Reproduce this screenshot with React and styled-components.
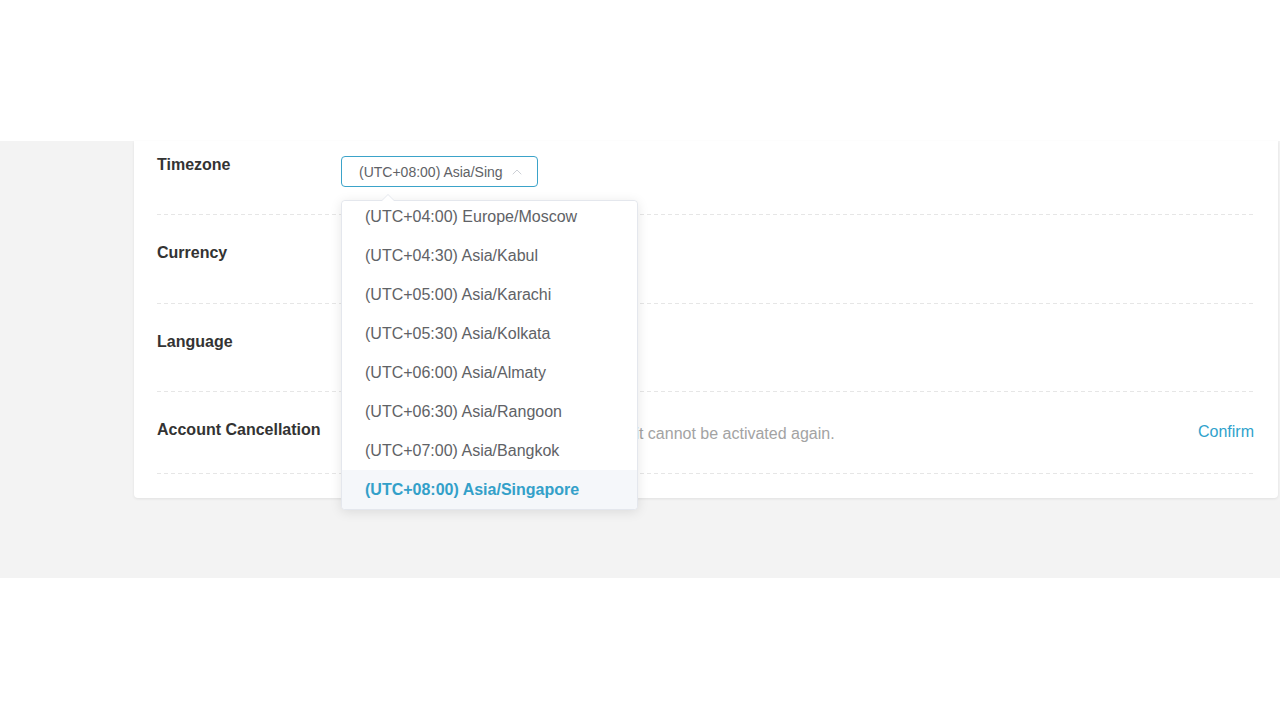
import React from "react";
import styled, { createGlobalStyle } from "styled-components";
import { ChevronUp } from "lucide-react";

const GlobalStyle = createGlobalStyle`
  body {
    margin: 0;
    background: #ffffff;
    font-family: "Liberation Sans", Arial, Helvetica, sans-serif;
  }
`;

const TopSpace = styled.div`
  height: 141px;
  background: #ffffff;
`;

const Band = styled.div`
  height: 437px;
  background: #f3f3f3;
  padding: 0 2px 0 134px;
`;

const Card = styled.div`
  background: #ffffff;
  border-radius: 0 0 4px 4px;
  box-shadow: 0 1px 3px rgba(0, 0, 0, 0.08);
  padding: 0 24px 24px 23px;
`;

const Row = styled.div`
  display: flex;
  align-items: flex-start;
  padding: ${(p) => (p.first ? "14px 0 28px" : p.tight ? "28px 0 28px" : "28px 0 29px")};
  background-image: linear-gradient(to right, #e6e6e6 60%, transparent 40%);
  background-size: 7px 1px;
  background-repeat: repeat-x;
  background-position: bottom left;
`;

const Label = styled.div`
  width: 184px;
  flex-shrink: 0;
  padding-top: 1px;
  font-size: 16px;
  line-height: 18px;
  font-weight: bold;
  color: #333333;
`;

const Value = styled.div`
  flex: 1;
  display: flex;
  align-items: flex-start;
  justify-content: space-between;
`;

const SelectWrap = styled.div`
  position: relative;
  width: 197px;
  padding-top: 1px;
`;

const SelectBox = styled.div`
  height: 31px;
  box-sizing: border-box;
  border: 1px solid ${(p) => (p.open ? "#3ba3c9" : "#dcdfe6")};
  border-radius: 4px;
  display: flex;
  align-items: center;
  padding: 0 12px 0 17px;
  gap: 6px;
  font-size: 14px;
  color: #606266;
  background: #ffffff;
`;

const SelectText = styled.span`
  flex: 1;
  overflow: hidden;
  white-space: nowrap;
`;

const Dropdown = styled.div`
  position: absolute;
  top: 45px;
  left: 0;
  width: 297px;
  height: 310px;
  box-sizing: border-box;
  border: 1px solid #e4e7ed;
  border-radius: 4px;
  background: #ffffff;
  box-shadow: 0 2px 12px rgba(0, 0, 0, 0.1);
  z-index: 10;

  &::before {
    content: "";
    position: absolute;
    top: -7px;
    left: 40px;
    border: 6px solid transparent;
    border-top-width: 0;
    border-bottom-color: #e4e7ed;
  }

  &::after {
    content: "";
    position: absolute;
    top: -6px;
    left: 40px;
    border: 6px solid transparent;
    border-top-width: 0;
    border-bottom-color: #ffffff;
  }
`;

const OptionList = styled.ul`
  list-style: none;
  margin: 0;
  padding: 0;
  height: 100%;
  overflow: hidden;
  display: flex;
  flex-direction: column;
  justify-content: flex-end;
  border-radius: 4px;
`;

const Option = styled.li`
  flex-shrink: 0;
  height: 39px;
  line-height: 39px;
  padding: 0 23px;
  font-size: 16px;
  white-space: nowrap;
  color: ${(p) => (p.selected ? "#33a0c9" : "#606266")};
  font-weight: ${(p) => (p.selected ? "bold" : "normal")};
  background: ${(p) => (p.selected ? "#f5f7fa" : "#ffffff")};
`;

const Note = styled.div`
  font-size: 16px;
  line-height: 24px;
  color: #a3a3a3;
  margin-top: 2px;
`;

const ConfirmLink = styled.a`
  font-size: 16px;
  line-height: 22px;
  margin-top: 1px;
  color: #2fa2cc;
  cursor: pointer;
`;

const zones = [
  "(UTC+04:00) Europe/Moscow",
  "(UTC+04:30) Asia/Kabul",
  "(UTC+05:00) Asia/Karachi",
  "(UTC+05:30) Asia/Kolkata",
  "(UTC+06:00) Asia/Almaty",
  "(UTC+06:30) Asia/Rangoon",
  "(UTC+07:00) Asia/Bangkok",
  "(UTC+08:00) Asia/Singapore",
];

const Select = ({ value, open, children }) => (
  <SelectWrap>
    <SelectBox open={open}>
      <SelectText>{value}</SelectText>
      <ChevronUp size={16} color="#c0c4cc" strokeWidth={1.2} />
    </SelectBox>
    {children}
  </SelectWrap>
);

export default function App() {
  const selected = "(UTC+08:00) Asia/Singapore";
  return (
    <>
      <GlobalStyle />
      <TopSpace />
      <Band>
        <Card>
          <Row first>
            <Label>Timezone</Label>
            <Value>
              <Select value={selected} open>
                <Dropdown>
                  <OptionList>
                    {zones.map((z) => (
                      <Option key={z} selected={z === selected}>
                        {z}
                      </Option>
                    ))}
                  </OptionList>
                </Dropdown>
              </Select>
            </Value>
          </Row>
          <Row>
            <Label>Currency</Label>
            <Value>
              <Select value="SGD" />
            </Value>
          </Row>
          <Row tight>
            <Label>Language</Label>
            <Value>
              <Select value="English" />
            </Value>
          </Row>
          <Row tight>
            <Label>Account Cancellation</Label>
            <Value>
              <Note>Once closed, your account is erased and it cannot be activated again.</Note>
              <ConfirmLink>Confirm</ConfirmLink>
            </Value>
          </Row>
        </Card>
      </Band>
    </>
  );
}
